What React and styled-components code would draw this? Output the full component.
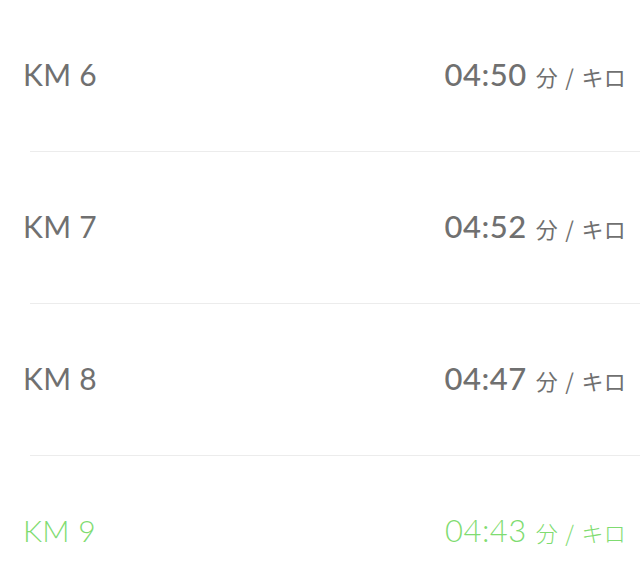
import React from "react";
import styled, { createGlobalStyle } from "styled-components";

const Global = createGlobalStyle`
  html, body { margin: 0; padding: 0; background: #fff; }
  body { font-family: Lato, "Noto Sans CJK JP", sans-serif; }
`;

const List = styled.div`
  display: flex;
  flex-direction: column;
  width: 640px;
`;

const Row = styled.div`
  display: flex;
  align-items: center;
  justify-content: space-between;
  height: 151px;
  padding: 0 14px 4px 23px;
  box-sizing: border-box;
  color: ${(p) => (p.$current ? "#7fdc71" : "#707070")};
`;

const Divider = styled.div`
  height: 1px;
  margin-left: 30px;
  background: #ececec;
`;

const Label = styled.div`
  font-size: 30px;
  font-weight: ${(p) => (p.$current ? 300 : 400)};
  letter-spacing: 0.3px;
`;

const Pace = styled.div`
  display: flex;
  align-items: baseline;
  gap: 9px;
`;

const Time = styled.span`
  font-size: 31px;
  font-weight: ${(p) => (p.$current ? 300 : 500)};
  letter-spacing: 0.5px;
`;

const Unit = styled.span`
  font-family: "Noto Sans CJK JP", sans-serif;
  font-size: 22px;
  font-weight: ${(p) => (p.$current ? 300 : 400)};
  word-spacing: 2px;
  letter-spacing: 0.3px;
`;

const rows = [
  { km: 6, pace: "04:50" },
  { km: 7, pace: "04:52" },
  { km: 8, pace: "04:47" },
  { km: 9, pace: "04:43", current: true },
];

export default function App() {
  return (
    <>
      <Global />
      <List>
        {rows.map((r, i) => (
          <React.Fragment key={r.km}>
            {i > 0 && <Divider />}
            <Row $current={r.current}>
              <Label $current={r.current}>KM {r.km}</Label>
              <Pace>
                <Time $current={r.current}>{r.pace}</Time>
                <Unit $current={r.current}>分 / キロ</Unit>
              </Pace>
            </Row>
          </React.Fragment>
        ))}
      </List>
    </>
  );
}
